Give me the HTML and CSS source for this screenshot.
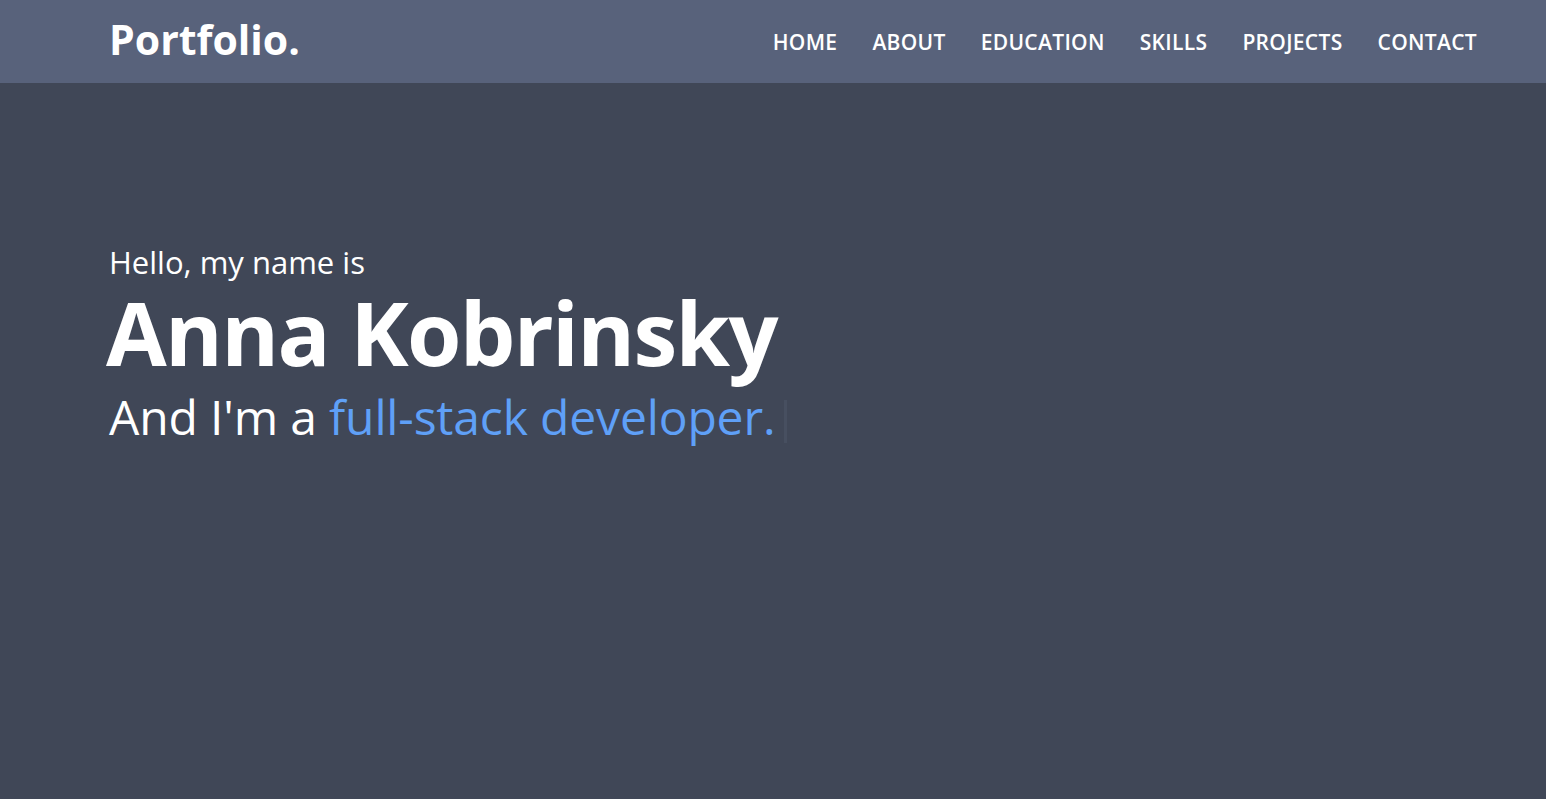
FILE: index.html
```html
<!DOCTYPE html>
<html lang="en">
<head>
<meta charset="utf-8">
<title>Portfolio</title>
<link rel="stylesheet" href="styles.css">
</head>
<body>
<header class="navbar">
  <div class="logo">Portfolio.</div>
  <nav class="menu">
    <a href="#">HOME</a>
    <a href="#">ABOUT</a>
    <a href="#">EDUCATION</a>
    <a href="#">SKILLS</a>
    <a href="#">PROJECTS</a>
    <a href="#">CONTACT</a>
  </nav>
</header>
<main class="hero">
  <div class="hero-text">
    <p class="hello">Hello, my name is</p>
    <h1 class="name">Anna Kobrinsky</h1>
    <p class="role">And I'm a <span class="accent">full-stack developer.</span><span class="cursor"></span></p>
  </div>
</main>
</body>
</html>
```

FILE: styles.css
```css
* { box-sizing: border-box; }
html, body { margin: 0; padding: 0; height: 100%; }
body {
  font-family: "Open Sans", "Noto Sans", sans-serif;
  background: #404757;
  color: #ffffff;
}
.navbar {
  height: 83px;
  background: #58627b;
  display: flex;
  align-items: center;
  justify-content: space-between;
  padding: 0 69px 0 109px;
}
.logo {
  font-size: 41px;
  font-weight: 700;
  margin-bottom: 5px;
}
.menu {
  display: flex;
  gap: 35px;
}
.menu a {
  color: #ffffff;
  text-decoration: none;
  font-size: 21px;
  font-weight: 600;
  letter-spacing: 0.32px;
}
.hero {
  height: 716px;
  padding: 159px 0 0 109px;
}
.hero-text { display: flex; flex-direction: column; align-items: flex-start; }
.hello {
  margin: 0;
  font-size: 31px;
  line-height: 40px;
}
.name {
  margin: 0 0 0 -3px;
  font-size: 88px;
  font-weight: 700;
  line-height: 100px;
  letter-spacing: -1.65px;
}
.role {
  margin: 0;
  font-size: 48px;
  line-height: 69px;
  letter-spacing: -0.15px;
}
.accent { color: #5fa0f7; }
.cursor {
  display: inline-block;
  vertical-align: -8px;
  width: 3px;
  height: 43px;
  background: #474f60;
  margin-left: 9px;
}
```
